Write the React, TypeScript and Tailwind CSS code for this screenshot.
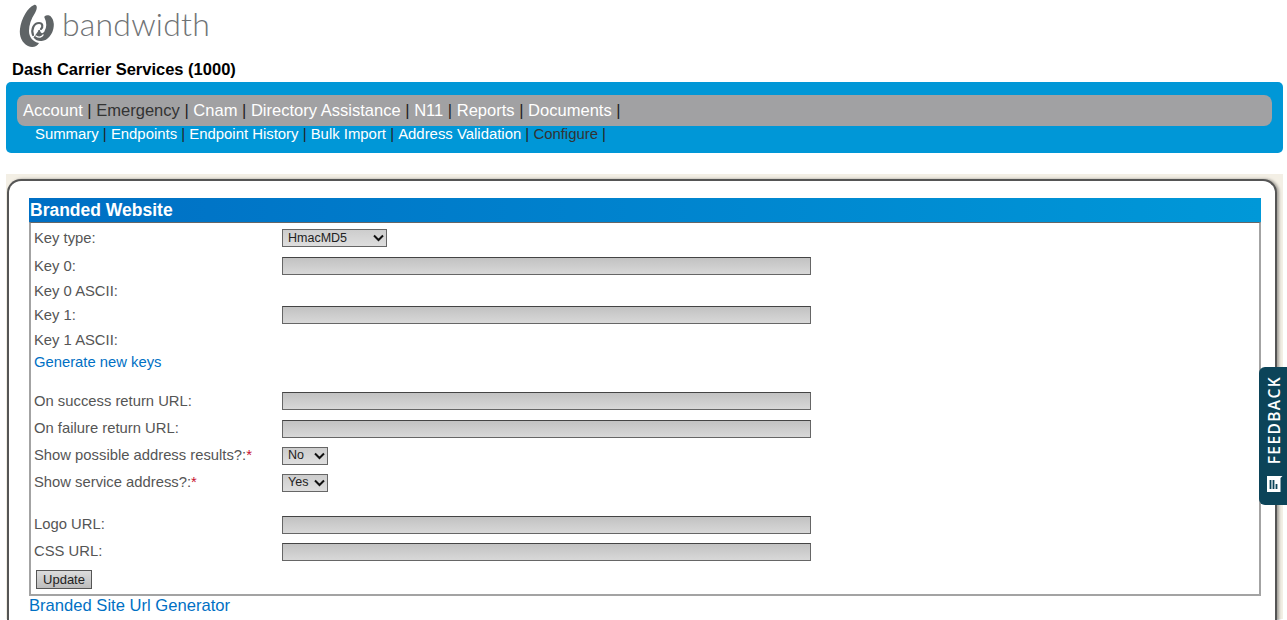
const sans = 'font-["Liberation_Sans",Arial,sans-serif]';

function Logo() {
    return (
        <svg width="36" height="44" viewBox="0 0 36 44" className="shrink-0">
            <path d="M15 1 C18 0 19 4 16 9 C12 15 10 21 10 27 C10 33 14 38 20 39 C18 43 13 44 9 42 C3 39 0 32 1 25 C2 15 9 3 15 1 Z" fill="#5f6466" />
            <path d="M14 31 C12 25 15 19 20 19 C24 19 24 23 22 25" fill="none" stroke="#5f6466" strokeWidth="2.2" strokeLinecap="round" />
            <path d="M15 33 C19 38 26 37 30 32 C35 26 35 18 32 14 C31 12 28 11 26 13 C28 17 29 23 26 28 C24 31 21 31 20 26" fill="#5f6466" stroke="#5f6466" strokeWidth="1.5" strokeLinejoin="round" />
            <path d="M17 32 C20 34 23 33 24 31" fill="none" stroke="#fff" strokeWidth="1.4" strokeLinecap="round" />
        </svg>
    );
}

function NavLinks({ items, active, textClass }: { items: string[]; active: string; textClass: string }) {
    return (
        <>
            {items.map((item) => (
                <span key={item} className={textClass}>
                    <span className={item === active ? 'text-[#333]' : 'text-white'}>{item}</span>
                    <span className="text-[#222]"> | </span>
                </span>
            ))}
        </>
    );
}

function TextField() {
    return <input type="text" className="block h-[18px] w-[529px] border border-[#666] border-t-[#444] bg-gradient-to-b from-[#c2c2c2] to-[#d8d8d8] outline-none" />;
}

function Dropdown({ value, options, width }: { value: string; options: string[]; width: string }) {
    return (
        <div className={`relative h-[18px] ${width}`}>
            <select defaultValue={value} className="block h-full w-full appearance-none rounded-none border border-[#666] bg-gradient-to-b from-[#cdcdcd] to-[#dedede] pl-[5px] text-[12.5px] leading-none text-[#222] outline-none">
                {options.map((o) => <option key={o}>{o}</option>)}
            </select>
            <svg width="11" height="8" viewBox="0 0 11 8" className="pointer-events-none absolute right-[3px] top-[5px]">
                <path d="M1 1.5 L5.5 6 L10 1.5" fill="none" stroke="#111" strokeWidth="2" />
            </svg>
        </div>
    );
}

function Row({ label, h, required, children }: { label: string; h: string; required?: boolean; children?: React.ReactNode }) {
    return (
        <div className={`flex items-center ${h}`}>
            <div className="w-[248px] shrink-0 text-[14.8px] text-[#555]">
                {label}
                {required && <span className="text-[#c8102e]">*</span>}
            </div>
            {children}
        </div>
    );
}

export default function App() {
    return (
        <div className={`h-[620px] w-[1287px] overflow-hidden bg-white ${sans}`}>
            <header className="flex h-[51px] items-start gap-[7px] pl-[19px] pt-[4px]">
                <Logo />
                <span className="mt-[4px] font-['Lato',sans-serif] text-[32px] font-light leading-none tracking-[0.2px] text-[#6f7375]">bandwidth</span>
            </header>

            <h1 className="mt-[9px] pl-[12px] text-[16.5px] font-bold leading-[18px] text-black">Dash Carrier Services (1000)</h1>

            <nav className="ml-[6px] mr-[4px] mt-[4px] h-[71px] rounded-[5px] bg-[#0097d7] px-[11px] pt-[13px]">
                <div className="flex h-[31px] items-center whitespace-pre rounded-[8px] bg-[#a1a1a3] pl-[6px] pt-[1px]">
                    <NavLinks
                        items={['Account', 'Emergency', 'Cnam', 'Directory Assistance', 'N11', 'Reports', 'Documents']}
                        active="Emergency"
                        textClass="text-[16.55px]"
                    />
                </div>
                <div className="flex h-[16px] items-center whitespace-pre pl-[18px]">
                    <NavLinks
                        items={['Summary', 'Endpoints', 'Endpoint History', 'Bulk Import', 'Address Validation', 'Configure']}
                        active="Configure"
                        textClass="text-[14.9px]"
                    />
                </div>
            </nav>

            <main className="ml-[6px] mr-[4px] mt-[21px] h-[445px] bg-[#f3efe5] pl-[1px] pr-[6px] pt-[5px]">
                <div className="h-[460px] rounded-t-[14px] border-l-2 border-r-2 border-t-2 border-[#555] bg-white pl-[20px] pr-[14px] pt-[17px] shadow-[2px_0_3px_rgba(0,0,0,0.35)]">
                    <h2 className="flex h-[24px] items-center bg-gradient-to-r from-[#006fc4] to-[#0098d8] pl-[1px] text-[17.5px] font-bold text-white">Branded Website</h2>
                    <section className="h-[374px] border-2 border-t border-[#a3a3a3] border-t-[#666] pl-[3px] pt-[1px]">
                        <Row label="Key type:" h="h-[28px]">
                            <Dropdown value="HmacMD5" options={['HmacMD5', 'HmacSHA1']} width="w-[105px]" />
                        </Row>
                        <Row label="Key 0:" h="h-[28px]"><TextField /></Row>
                        <Row label="Key 0 ASCII:" h="h-[22px]" />
                        <Row label="Key 1:" h="h-[26px]"><TextField /></Row>
                        <Row label="Key 1 ASCII:" h="h-[24px]" />
                        <div className="flex h-[20px] items-center text-[14.8px] text-[#0070c4]">Generate new keys</div>
                        <div className="h-[15px]" />
                        <Row label="On success return URL:" h="h-[28px]"><TextField /></Row>
                        <Row label="On failure return URL:" h="h-[27px]"><TextField /></Row>
                        <Row label="Show possible address results?:" h="h-[27px]" required>
                            <Dropdown value="No" options={['No', 'Yes']} width="w-[46px]" />
                        </Row>
                        <Row label="Show service address?:" h="h-[27px]" required>
                            <Dropdown value="Yes" options={['No', 'Yes']} width="w-[46px]" />
                        </Row>
                        <div className="h-[15px]" />
                        <Row label="Logo URL:" h="h-[27px]"><TextField /></Row>
                        <Row label="CSS URL:" h="h-[27px]"><TextField /></Row>
                        <div className="flex h-[29px] items-center pl-[2px]">
                            <button className="h-[19px] w-[56px] border border-[#555] bg-gradient-to-b from-[#dcdcdc] to-[#bdbdbd] text-[13px] leading-none text-[#222]">Update</button>
                        </div>
                    </section>
                    <a className="block text-[16.6px] leading-[19px] text-[#0070c4]">Branded Site Url Generator</a>
                </div>
            </main>

            <aside className="fixed right-0 top-[367px] flex h-[138px] w-[28px] flex-col items-center justify-between rounded-l-[6px] bg-[#0c4459] pb-[12px] pl-[3px] pt-[9px]">
                <span className="rotate-180 font-['Open_Sans',sans-serif] text-[15.5px] font-semibold leading-none tracking-[1.4px] text-white [writing-mode:vertical-rl]">FEEDBACK</span>
                <svg width="17" height="18" viewBox="0 0 17 18">
                    <path d="M1 1 H16.5 L14.5 3 V17 H1 Z" fill="#fff" />
                    <path d="M4.5 5 V14 M7.5 5 V14 M10.5 9 V14" stroke="#0c4459" strokeWidth="1.8" />
                </svg>
            </aside>
        </div>
    );
}
